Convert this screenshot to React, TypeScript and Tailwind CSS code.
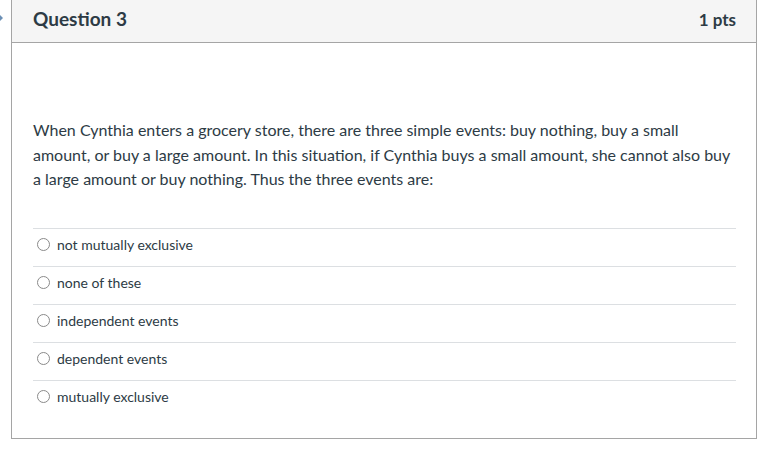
import React from "react";

const answers = [
  "not mutually exclusive",
  "none of these",
  "independent events",
  "dependent events",
  "mutually exclusive",
];

export default function App() {
  return (
    <div
      className="relative w-[780px] h-[449px] bg-white overflow-hidden text-[#2d3b45]"
      style={{ fontFamily: "Lato, 'Open Sans', sans-serif" }}
    >
      <div className="absolute left-0 top-[15px] w-0 h-0 border-t-[3px] border-b-[3px] border-l-[3px] border-t-transparent border-b-transparent border-l-[#6b8fb5]" />
      <div className="ml-[11px] w-[746px] border-x border-b border-[#a5a5a5]">
        <div className="h-[43px] bg-[#f5f5f5] border-b border-[#a5a5a5] flex items-center justify-between pl-[21px] pr-[20px] pb-[6px]">
          <div className="text-[19px] font-bold leading-none">Question 3</div>
          <div className="text-[17px] font-bold leading-none text-[#2d3b45] mt-[2px]">1 pts</div>
        </div>
        <div className="pl-[21px] pr-[20px] pt-[75px] pb-[20px]">
          <p className="text-[16px] leading-[24.5px]">
            When Cynthia enters a grocery store, there are three simple events: buy nothing, buy a small
            amount, or buy a large amount. In this situation, if Cynthia buys a small amount, she cannot also buy
            a large amount or buy nothing. Thus the three events are:
          </p>
          <div className="mt-[36px]">
            {answers.map((a, i) => (
              <div
                key={i}
                className="h-[38px] flex items-center pl-[4px] pb-[5px] border-t border-[#dcdfe2]"
              >
                <span className="w-[13px] h-[13px] rounded-full border border-[#8a8a8a] bg-white mr-[7px] shrink-0" />
                <span className="text-[14px]">{a}</span>
              </div>
            ))}
          </div>
        </div>
      </div>
    </div>
  );
}
